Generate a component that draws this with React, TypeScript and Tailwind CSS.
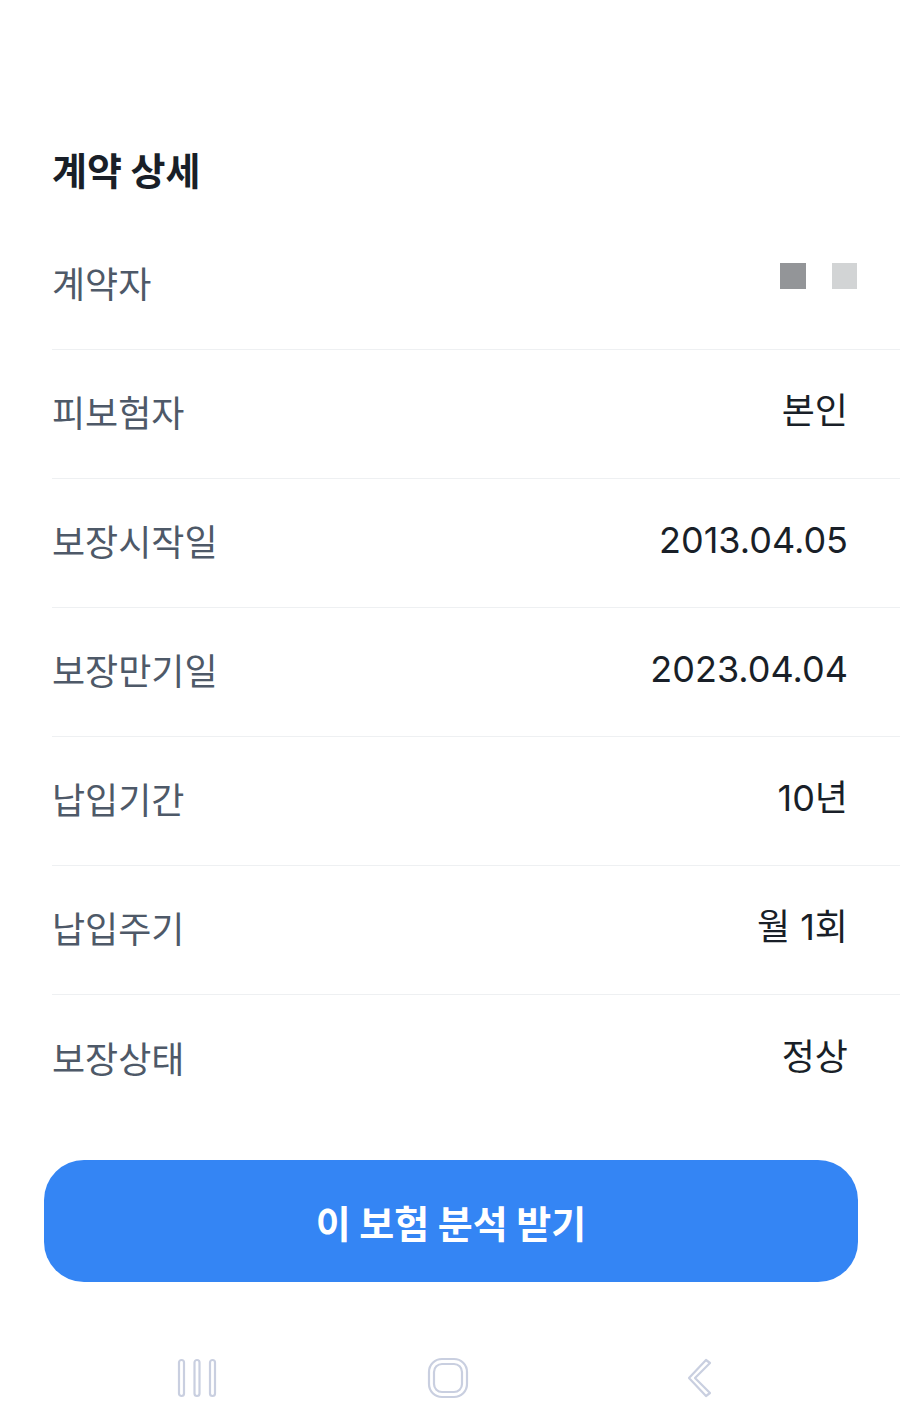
import { ReactNode } from "react";

const font = { fontFamily: '"Noto Sans CJK KR", "Noto Sans", sans-serif' };
const valueFont = { fontFamily: 'Inter, "Noto Sans CJK KR", sans-serif' };

const rows: { label: string; value: ReactNode }[] = [
  {
    label: "계약자",
    value: (
      <div className="-mr-[9px] -mt-[12px] flex items-center gap-[26px]">
        <div className="h-[26px] w-[26px] bg-[#939598]" />
        <div className="h-[26px] w-[25px] bg-[#d2d4d5]" />
      </div>
    ),
  },
  { label: "피보험자", value: "본인" },
  { label: "보장시작일", value: "2013.04.05" },
  { label: "보장만기일", value: "2023.04.04" },
  { label: "납입기간", value: "10년" },
  { label: "납입주기", value: "월 1회" },
  { label: "보장상태", value: "정상" },
];

export default function App() {
  return (
    <div className="flex min-h-[1423px] w-[900px] flex-col bg-white" style={font}>
      <div className="pl-[52px] pt-[144px]">
        <h1 className="mb-[27px] text-[38px] font-bold leading-[50px] text-[#191f28]">
          계약 상세
        </h1>
      </div>

      <div className="pl-[52px]">
        {rows.map((row, i) => (
          <div
            key={row.label}
            className={`flex h-[129px] items-center justify-between pr-[52px] ${
              i < rows.length - 1 ? "border-b-[1.5px] border-[#eef0f2]" : ""
            }`}
          >
            <span className="-mt-[6px] text-[36px] text-[#4e5968]">{row.label}</span>
            <span className="-mt-[6px] text-[36px] text-[#191f28]" style={valueFont}>
              {row.value}
            </span>
          </div>
        ))}
      </div>

      <div className="mt-[36px] pl-[44px] pr-[42px]">
        <button className="flex h-[122px] w-full items-center justify-center rounded-[40px] bg-[#3485f4] text-[38px] font-bold text-white">
          이 보험 분석 받기
        </button>
      </div>

      <div className="mt-[60px] flex h-[72px] items-center justify-between pl-[176px] pr-[186px]">
        <svg width="42" height="42" viewBox="0 0 42 42" fill="none" stroke="#c9cfe0" strokeWidth="2.2">
          <rect x="3" y="3" width="5" height="36" rx="2.5" />
          <rect x="18.5" y="3" width="5" height="36" rx="2.5" />
          <rect x="34" y="3" width="5" height="36" rx="2.5" />
        </svg>
        <svg width="44" height="44" viewBox="0 0 44 44" fill="none" stroke="#c9cfe0" strokeWidth="2.2" className="-ml-[6px]">
          <rect x="3" y="3" width="38" height="38" rx="13" />
          <rect x="8" y="8" width="28" height="28" rx="8" />
        </svg>
        <svg width="30" height="42" viewBox="0 0 30 42" fill="none" stroke="#c9cfe0" strokeWidth="2.2" strokeLinejoin="round">
          <path d="M22 3 L26 6 L11 21 L26 36 L22 39 L5 21 Z" />
        </svg>
      </div>
    </div>
  );
}
